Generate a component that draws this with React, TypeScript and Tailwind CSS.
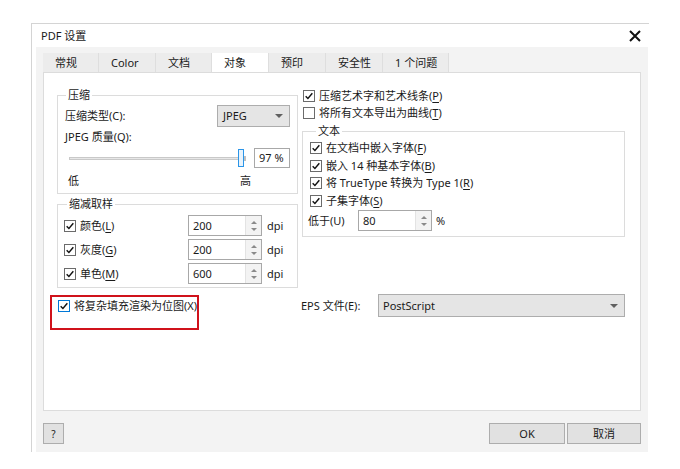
import React from 'react';

const font = { fontFamily: '"Noto Sans", "Noto Sans CJK SC", sans-serif' };

function Check({ checked, focus }: { checked?: boolean; focus?: boolean }) {
  return (
    <span
      className={`flex h-[12px] w-[12px] shrink-0 items-center justify-center border bg-white ${
        focus ? 'border-[#0078d7]' : 'border-[#6b6b6b]'
      }`}
    >
      {checked && (
        <svg viewBox="0 0 12 12" className="h-[10px] w-[10px]">
          <path d="M2 6.3 L4.7 9 L10 2.8" fill="none" stroke="#111" strokeWidth="1.7" />
        </svg>
      )}
    </span>
  );
}

function CheckRow({ label, checked, focus }: { label: React.ReactNode; checked?: boolean; focus?: boolean }) {
  return (
    <div className="flex h-[16px] items-center gap-[4px]">
      <Check checked={checked} focus={focus} />
      <span className="whitespace-nowrap">{label}</span>
    </div>
  );
}

function Arrow() {
  return (
    <svg viewBox="0 0 8 4" className="h-[4px] w-[8px]">
      <path d="M0 0 L8 0 L4 4 Z" fill="#606060" />
    </svg>
  );
}

function Spin({ value }: { value: string }) {
  return (
    <div className="flex h-[21px] w-[74px] border border-[#a8a8a8] bg-white">
      <span className="flex flex-1 items-center pl-[4px]">{value}</span>
      <div className="flex w-[16px] flex-col items-center justify-center gap-[4px] border-l border-[#e3e3e3] bg-[#f3f3f3]">
        <svg viewBox="0 0 6 3" className="h-[3px] w-[6px]">
          <path d="M0 3 L6 3 L3 0 Z" fill="#8a8a8a" />
        </svg>
        <svg viewBox="0 0 6 3" className="h-[3px] w-[6px]">
          <path d="M0 0 L6 0 L3 3 Z" fill="#8a8a8a" />
        </svg>
      </div>
    </div>
  );
}

function Ul({ c }: { c: string }) {
  return <span className="underline underline-offset-2">{c}</span>;
}

const tabs = [
  { name: '常规', w: 'w-[56px]' },
  { name: 'Color', w: 'w-[57px]' },
  { name: '文档', w: 'w-[56px]' },
  { name: '对象', w: 'w-[57px]', active: true },
  { name: '预印', w: 'w-[57px]' },
  { name: '安全性', w: 'w-[57px]' },
  { name: '1 个问题', w: 'w-[66px]' },
];

export default function App() {
  return (
    <div className="h-[469px] w-[680px] bg-white pt-[23px] text-[11px] leading-[16px] text-[#1a1a1a]" style={font}>
      <div className="ml-[31px] flex w-[618px] flex-col border-l border-t border-[#d4d4d4]">
        <div className="flex h-[23px] items-center justify-between pl-[9px] pr-[8px]">
          <span>PDF 设置</span>
          <svg viewBox="0 0 12 12" className="h-[12px] w-[12px]">
            <path d="M1 1 L11 11 M11 1 L1 11" stroke="#111" strokeWidth="2" />
          </svg>
        </div>

        <div className="ml-[4px] flex h-[405px] w-[612px] flex-col bg-[#f3f3f3] px-[7px] pb-[8px] pt-[6px]">
          {/* tabs */}
          <div className="flex h-[19px]">
            {tabs.map((t) => (
              <div
                key={t.name}
                className={`flex items-center border-r border-[#dedede] pl-[12px] ${t.w} ${
                  t.active ? 'bg-white' : 'bg-[#ececec]'
                }`}
              >
                {t.name}
              </div>
            ))}
          </div>

          {/* panel */}
          <div className="flex h-[339px] w-[598px] flex-col border border-[#dcdcdc] bg-white px-[13px] pt-[14px]">
            <div className="flex gap-[4px]">
              {/* left column */}
              <div className="flex w-[241px] flex-col">
                <fieldset className="h-[107px] border border-[#dcdcdc] px-[7px] pb-[3px]">
                  <legend className="ml-[1px] px-[2px]">压缩</legend>
                  <div className="mt-[2px] flex h-[22px] items-center justify-between">
                    <span>压缩类型(C):</span>
                    <div className="flex h-[22px] w-[73px] items-center justify-between border border-[#adadad] bg-[#e5e5e5] pl-[5px] pr-[6px]">
                      <span>JPEG</span>
                      <Arrow />
                    </div>
                  </div>
                  <div className="mt-[2px] h-[16px]">JPEG 质量(Q):</div>
                  <div className="mt-[3px] flex h-[20px] items-center">
                    <div className="relative ml-[4px] h-[20px] w-[177px]">
                      <div className="absolute left-0 right-0 top-[9px] h-[3px] border border-[#c9c9c9] bg-[#e7e7e7]" />
                      <div className="absolute right-0 top-[8px] h-[5px] w-[3px] bg-[#c0c0c0]" />
                      <div className="absolute left-[169px] top-[1px] h-[18px] w-[6px] border border-[#2b95e8] bg-[#e8f3fc]" />
                    </div>
                    <div className="ml-[8px] flex h-[20px] w-[36px] items-center border border-[#a8a8a8] pl-[4px]">97 %</div>
                  </div>
                  <div className="mt-[5px] flex h-[16px] pl-[3px]">
                    <span>低</span>
                    <span className="ml-[161px]">高</span>
                  </div>
                </fieldset>

                <fieldset className="mt-[2px] h-[92px] border border-[#dcdcdc] pl-[6px] pb-[2px]">
                  <legend className="ml-[3px] px-[2px]">缩减取样</legend>
                  <div className="mt-[3px] flex flex-col gap-[3px]">
                    {[
                      ['颜色', 'L', '200'],
                      ['灰度', 'G', '200'],
                      ['单色', 'M', '600'],
                    ].map(([n, k, v]) => (
                      <div key={n} className="flex h-[21px] items-center">
                        <div className="w-[124px]">
                          <CheckRow
                            checked
                            label={
                              <>
                                {n}(<Ul c={k} />)
                              </>
                            }
                          />
                        </div>
                        <Spin value={v} />
                        <span className="ml-[5px]">dpi</span>
                      </div>
                    ))}
                  </div>
                </fieldset>
              </div>

              {/* right column */}
              <div className="flex w-[323px] flex-col pl-[1px]">
                <div className="mt-[1px]">
                  <CheckRow
                    checked
                    label={
                      <>
                        压缩艺术字和艺术线条(<Ul c="P" />)
                      </>
                    }
                  />
                </div>
                <div className="mt-[1px]">
                  <CheckRow
                    label={
                      <>
                        将所有文本导出为曲线(<Ul c="T" />)
                      </>
                    }
                  />
                </div>
                <fieldset className="-ml-[1px] mt-[2px] h-[114px] border border-[#dcdcdc] pl-[7px] pb-[5px]">
                  <legend className="ml-[6px] px-[2px]">文本</legend>
                  <div className="mt-[1px] flex flex-col gap-[1.6px]">
                    <CheckRow checked label={<>在文档中嵌入字体(<Ul c="F" />)</>} />
                    <CheckRow checked label={<>嵌入 14 种基本字体(<Ul c="B" />)</>} />
                    <CheckRow checked label={<>将 TrueType 转换为 Type 1(<Ul c="R" />)</>} />
                    <CheckRow checked label={<>子集字体(<Ul c="S" />)</>} />
                  </div>
                  <div className="-ml-[2px] mt-[1px] flex h-[22px] items-center">
                    <span className="w-[50px]">低于(U)</span>
                    <Spin value="80" />
                    <span className="ml-[4px]">%</span>
                  </div>
                </fieldset>
              </div>
            </div>

            {/* bottom row */}
            <div className="mt-[6px] flex gap-[3px]">
              <div className="w-[241px]">
                <div className="-ml-[7px] mt-[1px] h-[35px] w-[149px] border-2 border-[#d0121b] pl-[6px] pt-[1px]">
                  <CheckRow checked focus label={<>将复杂填充渲染为位图(X)</>} />
                </div>
              </div>
              <div className="flex h-[23px] items-center">
                <span className="w-[77px]">EPS 文件(E):</span>
                <div className="flex h-[23px] w-[247px] items-center justify-between border border-[#adadad] bg-[#e5e5e5] pl-[4px] pr-[6px]">
                  <span>PostScript</span>
                  <Arrow />
                </div>
              </div>
            </div>
          </div>

          {/* buttons */}
          <div className="mt-[12px] flex h-[21px] items-center">
            <div className="flex h-[21px] w-[21px] items-center justify-center border border-[#adadad] bg-[#e1e1e1] text-[10px]">
              ?
            </div>
            <div className="ml-auto flex h-[21px] w-[76px] items-center justify-center border border-[#adadad] bg-[#e1e1e1]">
              OK
            </div>
            <div className="ml-[2px] flex h-[21px] w-[74px] items-center justify-center border border-[#adadad] bg-[#e1e1e1]">
              取消
            </div>
          </div>
        </div>
      </div>
    </div>
  );
}
